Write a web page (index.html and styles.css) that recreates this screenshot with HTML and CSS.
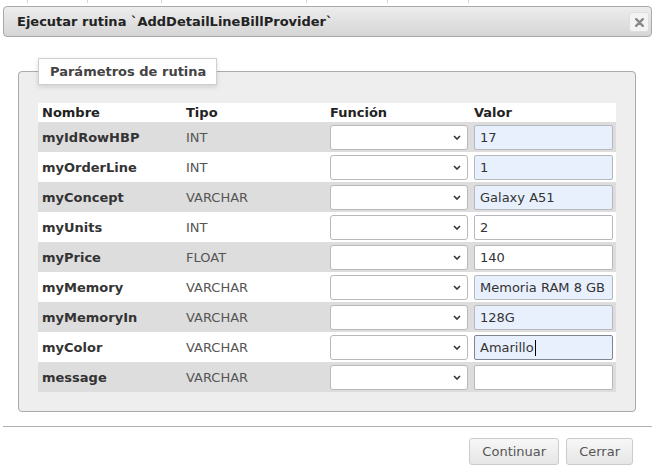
FILE: index.html
```html
<!DOCTYPE html>
<html lang="es">
<head>
<meta charset="utf-8">
<title>Ejecutar rutina</title>
<link rel="stylesheet" href="styles.css">
</head>
<body>
<div class="strip"><span></span><span></span><span></span><span></span><span></span><span></span><span></span></div>
<div class="titlebar">
  <span class="title">Ejecutar rutina `AddDetailLineBillProvider`</span>
  <button class="close" type="button" aria-label="Cerrar"><svg width="9" height="9" viewBox="0 0 9 9"><path d="M1.2 1.2L7.8 7.8M7.8 1.2L1.2 7.8" stroke="#8a8a8a" stroke-width="2.4" stroke-linecap="round"/></svg></button>
</div>
<fieldset class="params">
  <legend>Parámetros de rutina</legend>
  <table class="grid">
    <colgroup><col class="c-name"><col class="c-type"><col class="c-fn"><col class="c-val"></colgroup>
    <thead>
      <tr><th>Nombre</th><th>Tipo</th><th>Función</th><th>Valor</th></tr>
    </thead>
    <tbody>
      <tr><td class="name">myIdRowHBP</td><td class="type">INT</td><td><div class="sel"><select></select><svg class="chev" width="8" height="5" viewBox="0 0 8 5"><path d="M1 1L4 4L7 1" fill="none" stroke="#333" stroke-width="1.6"/></svg></div></td><td><input class="val fill" value="17"></td></tr>
      <tr><td class="name">myOrderLine</td><td class="type">INT</td><td><div class="sel"><select></select><svg class="chev" width="8" height="5" viewBox="0 0 8 5"><path d="M1 1L4 4L7 1" fill="none" stroke="#333" stroke-width="1.6"/></svg></div></td><td><input class="val fill" value="1"></td></tr>
      <tr><td class="name">myConcept</td><td class="type">VARCHAR</td><td><div class="sel"><select></select><svg class="chev" width="8" height="5" viewBox="0 0 8 5"><path d="M1 1L4 4L7 1" fill="none" stroke="#333" stroke-width="1.6"/></svg></div></td><td><input class="val fill" value="Galaxy A51"></td></tr>
      <tr><td class="name">myUnits</td><td class="type">INT</td><td><div class="sel"><select></select><svg class="chev" width="8" height="5" viewBox="0 0 8 5"><path d="M1 1L4 4L7 1" fill="none" stroke="#333" stroke-width="1.6"/></svg></div></td><td><input class="val plain" value="2"></td></tr>
      <tr><td class="name">myPrice</td><td class="type">FLOAT</td><td><div class="sel"><select></select><svg class="chev" width="8" height="5" viewBox="0 0 8 5"><path d="M1 1L4 4L7 1" fill="none" stroke="#333" stroke-width="1.6"/></svg></div></td><td><input class="val plain" value="140"></td></tr>
      <tr><td class="name">myMemory</td><td class="type">VARCHAR</td><td><div class="sel"><select></select><svg class="chev" width="8" height="5" viewBox="0 0 8 5"><path d="M1 1L4 4L7 1" fill="none" stroke="#333" stroke-width="1.6"/></svg></div></td><td><input class="val fill" value="Memoria RAM 8 GB"></td></tr>
      <tr><td class="name">myMemoryIn</td><td class="type">VARCHAR</td><td><div class="sel"><select></select><svg class="chev" width="8" height="5" viewBox="0 0 8 5"><path d="M1 1L4 4L7 1" fill="none" stroke="#333" stroke-width="1.6"/></svg></div></td><td><input class="val fill" value="128G"></td></tr>
      <tr><td class="name">myColor</td><td class="type">VARCHAR</td><td><div class="sel"><select></select><svg class="chev" width="8" height="5" viewBox="0 0 8 5"><path d="M1 1L4 4L7 1" fill="none" stroke="#333" stroke-width="1.6"/></svg></div></td><td><div class="focuswrap"><input class="val fill focus" value="Amarillo"><span class="caret"></span></div></td></tr>
      <tr><td class="name">message</td><td class="type">VARCHAR</td><td><div class="sel"><select></select><svg class="chev" width="8" height="5" viewBox="0 0 8 5"><path d="M1 1L4 4L7 1" fill="none" stroke="#333" stroke-width="1.6"/></svg></div></td><td><input class="val plain" value=""></td></tr>
    </tbody>
  </table>
</fieldset>
<div class="sep"></div>
<div class="actions">
  <button class="btn" type="button">Continuar</button>
  <button class="btn" type="button">Cerrar</button>
</div>
</body>
</html>
```
FILE: styles.css
```css
html, body {
  margin: 0;
  padding: 0;
  background: #fff;
}
body {
  font-family: "DejaVu Sans", Verdana, sans-serif;
  font-size: 13px;
  color: #333;
}
.strip {
  display: grid;
  grid-template-columns: 27px 60px 74px 145px 81px 81px 1fr;
  height: 3px;
  background: #fff;
}
.strip span {
  border-left: 1px solid #d4d4d4;
}
.strip span:first-child {
  border-left: 0;
}
.titlebar {
  margin: 3px 3px 0;
  height: 31px;
  box-sizing: border-box;
  border: 1px solid #a9a9a9;
  border-radius: 4px;
  background: linear-gradient(#ededed, #d5d5d5);
  display: flex;
  align-items: center;
  justify-content: space-between;
  padding: 0 2px 0 13px;
}
.title {
  font-weight: bold;
  color: #222;
}
.close {
  width: 20px;
  height: 20px;
  box-sizing: border-box;
  padding: 0;
  border: 1px solid #dedede;
  border-radius: 3px;
  background: #f3f3f3;
  display: flex;
  align-items: center;
  justify-content: center;
  margin-top: 1px;
}
.params {
  margin: 21px 19px 0 18px;
  padding: 0 19px 19px;
  border: 1px solid #ababab;
  border-radius: 4px;
  background: #eeeeee;
  min-width: 0;
}
.params legend {
  box-sizing: border-box;
  height: 27px;
  line-height: 25px;
  padding: 0 10px 0 11px;
  border: 1px solid #cfcfcf;
  background: #fff;
  box-shadow: 0 2px 5px rgba(0, 0, 0, 0.13);
  font-weight: bold;
  color: #444;
}
.grid {
  margin-top: 18px;
  border-collapse: collapse;
  table-layout: fixed;
  width: 578px;
}
.c-name, .c-type, .c-fn { width: 144px; }
.c-val { width: 146px; }
.grid th {
  height: 19px;
  padding: 0 4px;
  text-align: left;
  font-weight: bold;
  color: #222;
  background: #fff;
  vertical-align: middle;
}
.grid td {
  height: 30px;
  padding: 0 4px;
  vertical-align: middle;
  box-sizing: border-box;
}
.grid tbody tr:nth-child(odd) td { background: #dddddd; }
.grid tbody tr:nth-child(even) td { background: #ffffff; }
.name {
  font-weight: bold;
  color: #333;
}
.type {
  color: #555;
}
.sel {
  position: relative;
  width: 138px;
  height: 25px;
}
.sel select {
  appearance: none;
  -webkit-appearance: none;
  width: 138px;
  height: 25px;
  box-sizing: border-box;
  margin: 0;
  border: 1px solid #b9b9b9;
  border-radius: 3px;
  background: #fff;
  display: block;
}
.chev {
  position: absolute;
  right: 7px;
  top: 10px;
}
.val {
  display: block;
  width: 139px;
  height: 25px;
  box-sizing: border-box;
  margin: 0;
  padding: 0 5px;
  border: 1px solid #b5b8bd;
  border-radius: 2px;
  font-family: "DejaVu Sans", Verdana, sans-serif;
  font-size: 13px;
  color: #333;
  outline: none;
}
.fill { background: #e8f0fe; }
.plain { background: #fff; }
.focus { border-color: #7f8590; }
.focuswrap {
  position: relative;
}
.caret {
  position: absolute;
  left: 61px;
  top: 5px;
  width: 1px;
  height: 16px;
  background: #000;
}
.sep {
  margin: 14px 3px 0;
  border-top: 1px solid #b0b0b0;
}
.actions {
  display: flex;
  justify-content: flex-end;
  gap: 7px;
  padding: 11px 22px 0 0;
}
.btn {
  height: 27px;
  box-sizing: border-box;
  padding: 0 12px;
  border: 1px solid #cbcbcb;
  border-radius: 3px;
  background: linear-gradient(#f7f7f7, #e6e6e6);
  font-family: "DejaVu Sans", Verdana, sans-serif;
  font-size: 13px;
  color: #555;
}
```
